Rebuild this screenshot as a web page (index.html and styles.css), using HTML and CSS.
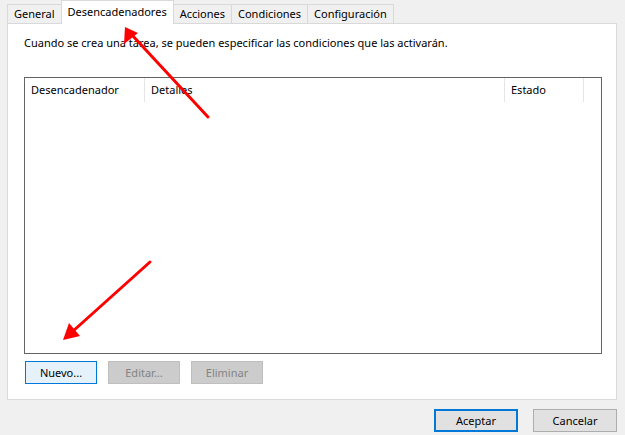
FILE: index.html
```html
<!DOCTYPE html>
<html lang="es">
<head>
    <meta charset="UTF-8">
    <title>Propiedades de tarea</title>
    <link rel="stylesheet" href="styles.css">
</head>
<body>
    <div class="dialog">
        <div class="tabs">
            <div class="tab">General</div>
            <div class="tab active">Desencadenadores</div>
            <div class="tab">Acciones</div>
            <div class="tab">Condiciones</div>
            <div class="tab">Configuración</div>
        </div>
        <div class="panel">
            <p class="intro">Cuando se crea una tarea, se pueden especificar las condiciones que las activarán.</p>
            <div class="list">
                <div class="list-head">
                    <div class="col col-trigger">Desencadenador</div>
                    <div class="col col-details">Detalles</div>
                    <div class="col col-state">Estado</div>
                </div>
            </div>
            <div class="actions">
                <button class="btn btn-focus">Nuevo...</button>
                <button class="btn" disabled>Editar...</button>
                <button class="btn" disabled>Eliminar</button>
            </div>
        </div>
        <div class="footer">
            <button class="btn btn-wide btn-default">Aceptar</button>
            <button class="btn btn-wide">Cancelar</button>
        </div>
    </div>

    <!-- flechas rojas de la captura -->
    <svg class="marks" width="625" height="435" viewBox="0 0 625 435">
        <g stroke="#ff0000" stroke-width="3" stroke-linecap="round" fill="#ff0000">
            <line x1="208" y1="117" x2="132" y2="35"/>
            <line x1="150" y1="262" x2="72" y2="332"/>
        </g>
        <polygon points="125,27 124,44 138,33" fill="#ff0000"/>
        <polygon points="63,340 80,336 69,323" fill="#ff0000"/>
    </svg>
</body>
</html>
```

FILE: styles.css
```css
body {
    margin: 0;
    width: 625px;
    height: 435px;
    background: #f0f0f0;
    font-family: "Noto Sans", "Open Sans", Arial, sans-serif;
    font-size: 11px;
    color: #000;
    overflow: hidden;
    position: relative;
}
.dialog {
    padding: 0 8px 0 7px;
}
.tabs {
    display: flex;
    align-items: flex-end;
    height: 23px;
    position: relative;
    z-index: 1;
}
.tab {
    height: 19px;
    line-height: 18px;
    padding: 0 6px;
    border: 1px solid #d9d9d9;
    border-bottom: none;
    margin-left: -1px;
    background: #f0f0f0;
    box-sizing: border-box;
}
.tab:first-child {
    margin-left: 0;
}
.tab.active {
    height: 24px;
    margin-bottom: -1px;
    background: #fff;
    padding: 0 6px;
    line-height: 22px;
}
.panel {
    background: #fff;
    border: 1px solid #d9d9d9;
    height: 377px;
    box-sizing: border-box;
    padding: 0 14px 0 16px;
}
.intro {
    margin: 11px 0 0;
    line-height: 16px;
}
.list {
    margin-top: 26px;
    height: 277px;
    border: 1px solid #646464;
    box-sizing: border-box;
}
.list-head {
    display: flex;
    height: 24px;
    line-height: 24px;
}
.col {
    padding-left: 6px;
    border-right: 1px solid #e5e5e5;
    box-sizing: border-box;
}
.col-trigger { width: 120px; }
.col-details { width: 360px; }
.col-state { width: 79px; }
.actions {
    display: flex;
    gap: 11px;
    margin-top: 7px;
    padding-left: 1px;
}
.btn {
    width: 72px;
    height: 23px;
    padding: 0;
    font: inherit;
    border: 1px solid #adadad;
    background: #e1e1e1;
    color: #000;
    box-sizing: border-box;
}
.btn:disabled {
    background: #cccccc;
    border-color: #bfbfbf;
    color: #838383;
}
.btn-focus {
    background: #e5f1fb;
    border-color: #0078d7;
}
.footer {
    display: flex;
    justify-content: flex-end;
    gap: 15px;
    margin-top: 9px;
}
.btn-wide {
    width: 84px;
}
.btn-default {
    border: 2px solid #0078d7;
}
.marks {
    position: absolute;
    left: 0;
    top: 0;
    pointer-events: none;
}
```
